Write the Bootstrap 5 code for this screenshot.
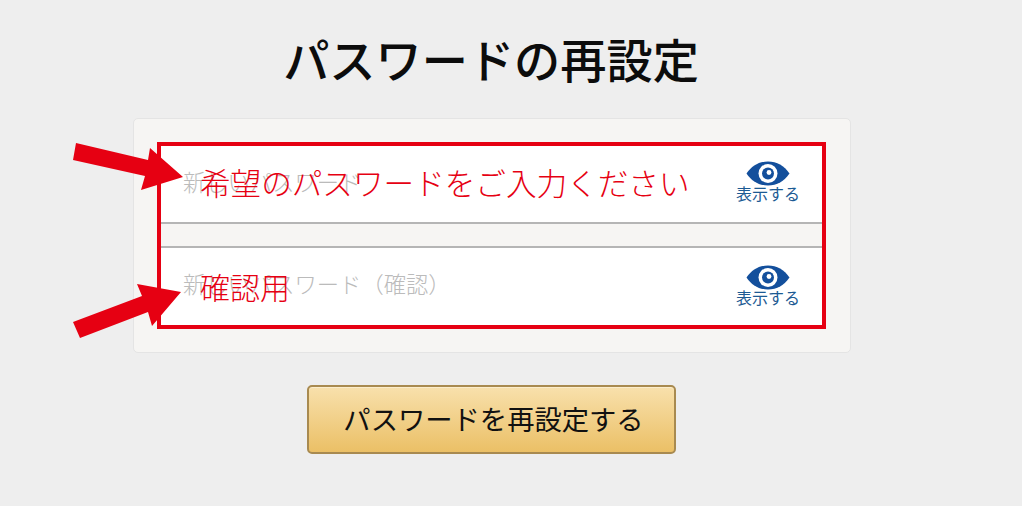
<!DOCTYPE html>
<html lang="ja">
<head>
<meta charset="utf-8">
<title>パスワードの再設定</title>
<link href="https://cdn.jsdelivr.net/npm/bootstrap@5.3.0/dist/css/bootstrap.min.css" rel="stylesheet">
<style>
html,body{height:506px;overflow:hidden}
body{background:#eeeeee;font-family:"Liberation Sans","Noto Sans CJK JP",sans-serif;position:relative}
.stage{width:1022px;padding-top:33px}
.ttl{font-size:46.2px;line-height:58px;color:#0c0c0c;margin:0 0 27px;padding-right:40px;text-align:center;font-weight:500}
.panel{width:718px;height:235px;margin-left:133px;background:#f6f5f3;border:1px solid #e4e4e4;border-radius:5px;padding:23px 23px 0}
.redbox{width:669px;height:187px;border:4px solid #e60012;background:#f6f5f3}
.field{background:#fff;padding:0 22px 0 22px}
.field1{border-bottom:2px solid #b5b5b5;height:78px}
.field2{border-top:2px solid #b5b5b5;height:79px}
.gap{height:22px}
.ph{font-size:22.3px;color:#bbb;line-height:1;white-space:nowrap;font-weight:300}
.reveal{width:64px;color:#1c5a93;font-size:16px;line-height:1;margin-top:-4px}
.field2 .reveal{margin-top:-2px}
.revtxt{white-space:nowrap;margin-top:1px}
.over{position:absolute;color:#e60012;font-size:30.6px;line-height:1;white-space:nowrap;font-weight:300}
.ov1{left:200px;top:169px}
.ov2{left:200px;top:274px;font-size:30px}
.arrow{position:absolute;left:0;top:0;pointer-events:none}
.go{display:block;width:369px;height:69px;margin:32px 0 0 307px;border:2px solid #a88a50;border-radius:5px;background:linear-gradient(#f8e0ac,#ebc066);box-shadow:inset 0 1px 0 #fbedcc;font-size:27.3px;color:#111;padding:3px 0 0 4px;line-height:1}
</style>
</head>
<body>
<div class="stage">
  <h1 class="ttl">パスワードの再設定</h1>
  <div class="panel">
    <div class="redbox">
      <div class="field field1 d-flex align-items-center justify-content-between">
        <span class="ph">新しいパスワード</span>
        <div class="reveal d-flex flex-column align-items-center">
          <svg width="44" height="25" viewBox="0 0 44 25"><path d="M.5 12.5C6 4.5 13 .5 22 .5s16 4 21.5 12C38 20.500 31 24.500 22 24.500S6 20.500 .5 12.500Z" fill="#134f9c"/><circle cx="22" cy="12.500" r="9.500" fill="#fff"/><circle cx="22" cy="12.500" r="6" fill="#134f9c"/><circle cx="23" cy="11.500" r="2.400" fill="#fff"/></svg>
          <span class="revtxt">表示する</span>
        </div>
      </div>
      <div class="gap"></div>
      <div class="field field2 d-flex align-items-center justify-content-between">
        <span class="ph">新しいパスワード（確認）</span>
        <div class="reveal d-flex flex-column align-items-center">
          <svg width="44" height="25" viewBox="0 0 44 25"><path d="M.5 12.5C6 4.5 13 .5 22 .5s16 4 21.5 12C38 20.500 31 24.500 22 24.500S6 20.500 .5 12.500Z" fill="#134f9c"/><circle cx="22" cy="12.500" r="9.500" fill="#fff"/><circle cx="22" cy="12.500" r="6" fill="#134f9c"/><circle cx="23" cy="11.500" r="2.400" fill="#fff"/></svg>
          <span class="revtxt">表示する</span>
        </div>
      </div>
    </div>
  </div>
  <button type="button" class="btn go">パスワードを再設定する</button>
</div>
<div class="over ov1">希望のパスワードをご入力ください</div>
<div class="over ov2">確認用</div>
<svg class="arrow" width="1022" height="506" viewBox="0 0 1022 506">
  <polygon points="76,143 148,160 150,148 183,177 141,190 145,176 73,160" fill="#e60012"/>
  <polygon points="73,322 142,296 137,284 181,292 152,326 148,312 80,338" fill="#e60012"/>
</svg>
</body>
</html>
